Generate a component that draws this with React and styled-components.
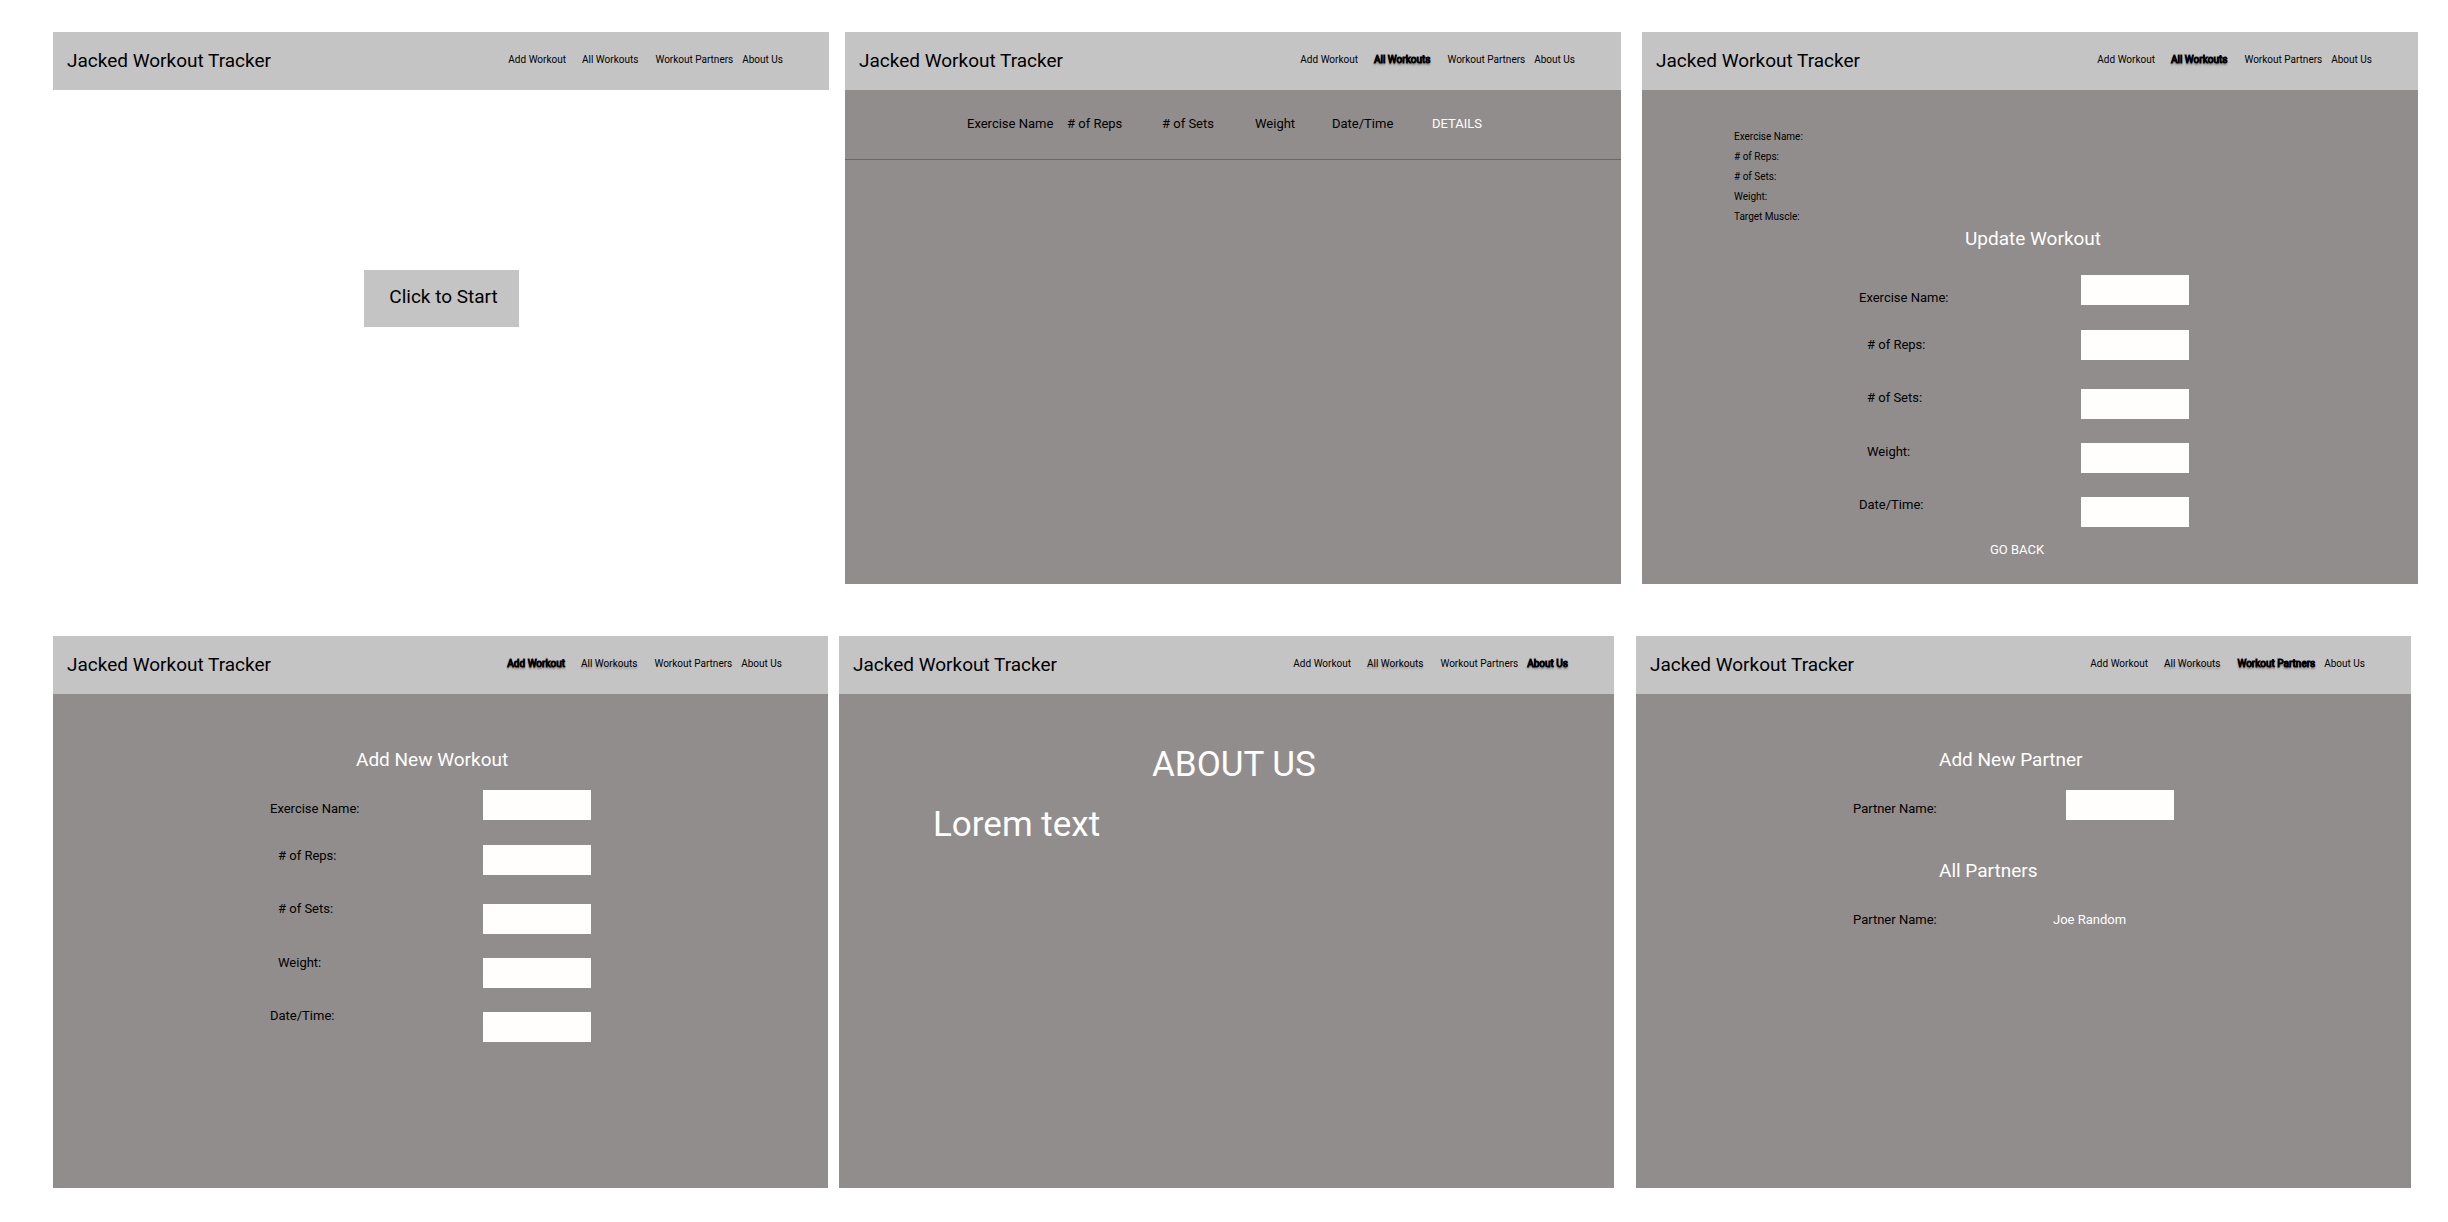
import React, { useId } from "react";
import styled, { createGlobalStyle, css } from "styled-components";

const GlobalStyle = createGlobalStyle`
  *, *::before, *::after { box-sizing: border-box; }
  body {
    margin: 0;
    background: #ffffff;
    color: #000000;
    font-family: Roboto, "Liberation Sans", sans-serif;
    font-size: 13px;
    line-height: 16px;
  }
  h1, h2, p, ul { margin: 0; padding: 0; font-weight: 400; }
  ul { list-style: none; }
  a { color: inherit; text-decoration: none; }
`;

const Board = styled.main`
  display: flex;
  flex-direction: column;
  gap: 52px;
  padding: 32px 0;
`;

const BoardRow = styled.div`
  display: flex;
  padding-left: 53px;
  padding-right: ${(p) => p.$end}px;
`;

const ScreenFrame = styled.section`
  flex: 1 1 0;
  min-width: 0;
  min-height: 552px;
  display: flex;
  flex-direction: column;
  margin-left: ${(p) => p.$before || 0}px;
  background: ${(p) => (p.$plain ? "#ffffff" : "#918d8c")};
`;

const Header = styled.header`
  display: flex;
  align-items: center;
  justify-content: space-between;
  height: 58px;
  padding: 0 46px 0 14px;
  background: #c4c4c4;
`;

const Brand = styled.h1`
  font-size: 19px;
  line-height: 24px;
`;

const Nav = styled.nav`
  display: flex;
  padding-bottom: 2px;
  font-size: 10px;
`;

const NavLink = styled.a`
  margin-left: ${(p) => p.$gap}px;
  white-space: nowrap;
  ${(p) =>
    p.$raised &&
    css`
      text-shadow: 0 2px 2px rgba(0, 0, 0, 0.25);
    `}
  ${(p) =>
    p.$active &&
    css`
      -webkit-text-stroke: 1px #000000;
      text-shadow: 0 2px 2px rgba(0, 0, 0, 0.5);
    `}
`;

const Body = styled.div`
  flex: 1;
  display: flex;
  flex-direction: column;
  padding-top: ${(p) => p.$top || 0}px;
`;

const StartArea = styled(Body)`
  align-items: center;
`;

const StartButton = styled.button`
  width: 155px;
  height: 57px;
  border: 0;
  padding: 0 0 4px 5px;
  background: #c4c4c4;
  color: #000000;
  font: 19px/24px Roboto, "Liberation Sans", sans-serif;
  cursor: pointer;
`;

const WorkoutTable = styled.table`
  width: 100%;
  table-layout: fixed;
  border-collapse: collapse;
  border-bottom: 1px solid #b14a50;
`;

const ColumnHead = styled.th`
  width: ${(p) => (p.$width ? `${p.$width}px` : "auto")};
  height: 69px;
  padding: 26px 0 0 ${(p) => p.$indent || 0}px;
  text-align: left;
  vertical-align: top;
  font-weight: 400;
  white-space: nowrap;
`;

const LightLink = styled.a`
  color: #ffffff;
`;

const BackLink = styled(LightLink)`
  align-self: flex-start;
  margin: 15px 0 0 348px;
`;

const Heading = styled.h2`
  margin-top: ${(p) => p.$top || 0}px;
  padding-left: ${(p) => p.$left}px;
  color: #ffffff;
  font-size: 19px;
  line-height: 24px;
`;

const Display = styled.h2`
  padding-left: 313px;
  color: #ffffff;
  font-size: 35px;
  line-height: 60px;
`;

const DisplayText = styled.p`
  padding-left: 94px;
  color: #ffffff;
  font-size: 35px;
  line-height: 60px;
`;

const DetailList = styled.ul`
  padding-left: 92px;
  font-size: 10px;
  line-height: 20px;
`;

const Form = styled.form`
  display: flex;
  margin-top: ${(p) => p.$top}px;
  padding-left: 217px;
`;

const Labels = styled.div`
  display: flex;
  flex-direction: column;
  width: ${(p) => p.$width}px;
  padding-top: ${(p) => p.$drop}px;
`;

const Label = styled.label`
  margin-top: ${(p) => p.$gap || 0}px;
  padding-left: ${(p) => (p.$indented ? 8 : 0)}px;
`;

const Inputs = styled.div`
  display: flex;
  flex-direction: column;
`;

const Input = styled.input`
  width: 108px;
  height: 30px;
  margin: ${(p) => p.$gap || 0}px 0 0;
  padding: 0 8px;
  border: 0;
  background: #fffefc;
  font: inherit;
`;

const PartnerRow = styled.div`
  display: flex;
  margin-top: 29px;
  padding-left: 217px;
`;

const PartnerKey = styled.span`
  width: 200px;
`;

const PartnerName = styled.span`
  color: #ffffff;
`;

const LINKS = [
  { name: "Add Workout", gap: 0 },
  { name: "All Workouts", gap: 16 },
  { name: "Workout Partners", gap: 17 },
  { name: "About Us", gap: 9 },
];

const WORKOUT_FIELDS = [
  { name: "Exercise Name:", labelGap: 0, inputGap: 0 },
  { name: "# of Reps:", labelGap: 31, inputGap: 25, indented: true },
  { name: "# of Sets:", labelGap: 37, inputGap: 29, indented: true },
  { name: "Weight:", labelGap: 38, inputGap: 24, indented: true },
  { name: "Date/Time:", labelGap: 37, inputGap: 24 },
];

const PARTNER_FIELDS = [{ name: "Partner Name:", labelGap: 0, inputGap: 0 }];

const COLUMNS = [
  { name: "Exercise Name", width: 222, indent: 122 },
  { name: "# of Reps", width: 95 },
  { name: "# of Sets", width: 93 },
  { name: "Weight", width: 77 },
  { name: "Date/Time", width: 100 },
];

const DETAILS = ["Exercise Name:", "# of Reps:", "# of Sets:", "Weight:", "Target Muscle:"];

function Screen({ active, before, plain, raised, children }) {
  return (
    <ScreenFrame $before={before} $plain={plain}>
      <Header>
        <Brand>Jacked Workout Tracker</Brand>
        <Nav>
          {LINKS.map((link) => (
            <NavLink
              key={link.name}
              href="#"
              $gap={link.gap}
              $active={link.name === active}
              $raised={link.name === raised}
            >
              {link.name}
            </NavLink>
          ))}
        </Nav>
      </Header>
      {children}
    </ScreenFrame>
  );
}

function Fields({ fields, top, drop, labelWidth }) {
  const id = useId();
  return (
    <Form $top={top}>
      <Labels $width={labelWidth} $drop={drop}>
        {fields.map((f, i) => (
          <Label key={f.name} htmlFor={`${id}-${i}`} $gap={f.labelGap} $indented={f.indented}>
            {f.name}
          </Label>
        ))}
      </Labels>
      <Inputs>
        {fields.map((f, i) => (
          <Input key={f.name} id={`${id}-${i}`} type="text" $gap={f.inputGap} />
        ))}
      </Inputs>
    </Form>
  );
}

export default function App() {
  return (
    <>
      <GlobalStyle />
      <Board>
        <BoardRow $end={30}>
          <Screen plain>
            <StartArea $top={180}>
              <StartButton type="button">Click to Start</StartButton>
            </StartArea>
          </Screen>

          <Screen active="All Workouts" before={16}>
            <WorkoutTable>
              <thead>
                <tr>
                  {COLUMNS.map((c) => (
                    <ColumnHead key={c.name} scope="col" $width={c.width} $indent={c.indent}>
                      {c.name}
                    </ColumnHead>
                  ))}
                  <ColumnHead scope="col">
                    <LightLink href="#">DETAILS</LightLink>
                  </ColumnHead>
                </tr>
              </thead>
            </WorkoutTable>
          </Screen>

          <Screen active="All Workouts" before={21}>
            <Body $top={37}>
              <DetailList>
                {DETAILS.map((d) => (
                  <li key={d}>{d}</li>
                ))}
              </DetailList>
              <Heading $left={323}>Update Workout</Heading>
              <Fields fields={WORKOUT_FIELDS} top={24} drop={15} labelWidth={222} />
              <BackLink href="#">GO BACK</BackLink>
            </Body>
          </Screen>
        </BoardRow>

        <BoardRow $end={37}>
          <Screen active="Add Workout" raised="All Workouts">
            <Body $top={54}>
              <Heading $left={303}>Add New Workout</Heading>
              <Fields fields={WORKOUT_FIELDS} top={18} drop={11} labelWidth={213} />
            </Body>
          </Screen>

          <Screen active="About Us" raised="All Workouts" before={11}>
            <Body $top={41}>
              <Display>ABOUT US</Display>
              <DisplayText>Lorem text</DisplayText>
            </Body>
          </Screen>

          <Screen active="Workout Partners" raised="All Workouts" before={22}>
            <Body $top={54}>
              <Heading $left={303}>Add New Partner</Heading>
              <Fields fields={PARTNER_FIELDS} top={18} drop={11} labelWidth={213} />
              <Heading $left={303} $top={39}>
                All Partners
              </Heading>
              <PartnerRow>
                <PartnerKey>Partner Name:</PartnerKey>
                <PartnerName>Joe Random</PartnerName>
              </PartnerRow>
            </Body>
          </Screen>
        </BoardRow>
      </Board>
    </>
  );
}
